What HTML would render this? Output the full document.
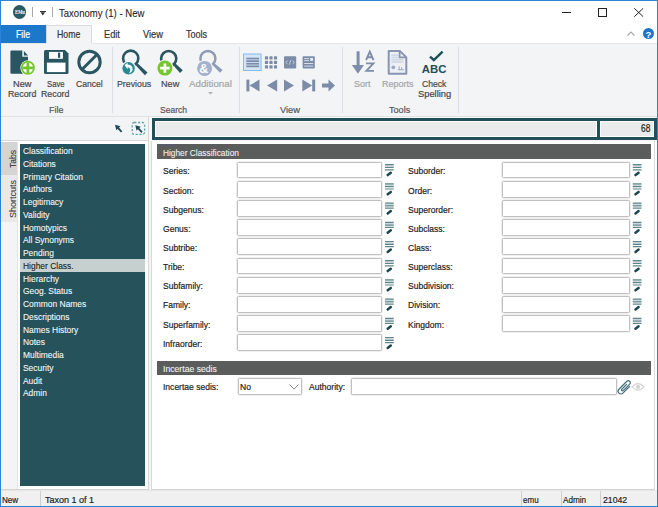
<!DOCTYPE html>
<html><head><meta charset="utf-8">
<style>
*{margin:0;padding:0;box-sizing:border-box}
html,body{width:658px;height:507px;overflow:hidden;background:#fff}
body{position:relative;font-family:"Liberation Sans",sans-serif;color:#222}
.a{position:absolute}
.t{position:absolute;white-space:nowrap;line-height:1;transform-origin:0 0}
.sep{position:absolute;width:1px;background:#dddee1}
.inp{position:absolute;background:#fff;border:1px solid #c0c0c0;border-radius:1.5px;box-shadow:0 0 0 0.6px #e2e2e2}
</style></head><body>

<div class="a" style="left:0;top:0;width:658px;height:507px;border:1px solid #2c84d6;z-index:50"></div>
<div class="a" style="left:13.1px;top:5.3px;width:13.3px;height:13.3px;border-radius:50%;background:#2b5a64"></div>
<div class="t" style="left:14.9px;top:9.0px;font-family:'Liberation Serif';font-size:6px;color:#fff;font-weight:bold;transform:scaleX(0.78);letter-spacing:-0.2px">EMu</div>
<div class="a" style="left:32px;top:7px;width:1px;height:9.5px;background:#a8a8a8"></div>
<div class="a" style="left:40px;top:10.6px;width:5.6px;height:1px;background:#333"></div>
<svg class="a" style="left:0;top:0" width="60" height="20"><path d="M40.5 12.3H45.1L42.8 15.6Z" fill="#333"/></svg>
<div class="a" style="left:52.2px;top:7px;width:1px;height:9.5px;background:#a8a8a8"></div>
<div class="t" style="left:58.60px;top:8.00px;font-size:11px;color:#1e1e1e;-webkit-text-stroke:0.1px #1e1e1e;transform:scaleX(0.8670);">Taxonomy (1) - New</div>
<div class="a" style="left:562px;top:12px;width:8.5px;height:1px;background:#222"></div>
<div class="a" style="left:597.7px;top:8px;width:9px;height:9px;border:1px solid #222"></div>
<svg class="a" style="left:634px;top:8px" width="10" height="9"><path d="M0.3 0.3L9.2 8.7M9.2 0.3L0.3 8.7" stroke="#222" stroke-width="1"/></svg>
<div class="a" style="left:1px;top:25px;width:44.5px;height:18px;background:#1b78cb"></div>
<div class="t" style="left:16.00px;top:29.00px;font-size:10.5px;color:#ffffff;-webkit-text-stroke:0.2px #ffffff;transform:scaleX(0.8284);">File</div>
<div class="a" style="left:46px;top:25px;width:46px;height:19px;background:#f3f4f6;border:1px solid #d9dadc;border-bottom:none"></div>
<div class="t" style="left:56.80px;top:29.00px;font-size:10.5px;color:#333;-webkit-text-stroke:0.2px #333;transform:scaleX(0.8321);">Home</div>
<div class="t" style="left:103.80px;top:29.00px;font-size:10.5px;color:#333;-webkit-text-stroke:0.2px #333;transform:scaleX(0.8785);">Edit</div>
<div class="t" style="left:143.00px;top:29.00px;font-size:10.5px;color:#333;-webkit-text-stroke:0.2px #333;transform:scaleX(0.8811);">View</div>
<div class="t" style="left:185.60px;top:29.00px;font-size:10.5px;color:#333;-webkit-text-stroke:0.2px #333;transform:scaleX(0.8612);">Tools</div>
<svg class="a" style="left:627px;top:31px" width="8" height="5"><path d="M0.5 4.5L4 1L7.5 4.5" stroke="#a8a8a8" fill="none" stroke-width="1.1"/></svg>
<div class="a" style="left:642.6px;top:28.2px;width:11.2px;height:11.2px;border-radius:50%;background:#1f74c8"></div>
<div class="t" style="left:645.4px;top:29.6px;font-size:9.5px;color:#fff;font-weight:bold">?</div>
<div class="a" style="left:1px;top:43px;width:656px;height:74px;background:#f3f4f6;border-top:1px solid #e3e4e6;border-bottom:1px solid #e1e2e4"></div>
<div class="a" style="left:46px;top:43px;width:46px;height:1px;background:#f3f4f6"></div>
<div class="sep" style="left:111.5px;top:47px;height:66px"></div>
<div class="sep" style="left:239px;top:47px;height:66px"></div>
<div class="sep" style="left:342.4px;top:47px;height:66px"></div>
<div class="sep" style="left:458px;top:47px;height:66px"></div>
<div class="t" style="left:13.00px;top:79.00px;font-size:9.5px;color:#474747;-webkit-text-stroke:0.2px #474747;transform:scaleX(0.9684);">New</div>
<div class="t" style="left:7.50px;top:89.00px;font-size:9.5px;color:#474747;-webkit-text-stroke:0.2px #474747;transform:scaleX(0.9281);">Record</div>
<div class="t" style="left:46.80px;top:79.00px;font-size:9.5px;color:#474747;-webkit-text-stroke:0.2px #474747;transform:scaleX(0.8111);">Save</div>
<div class="t" style="left:41.00px;top:89.00px;font-size:9.5px;color:#474747;-webkit-text-stroke:0.2px #474747;transform:scaleX(0.9281);">Record</div>
<div class="t" style="left:75.60px;top:79.00px;font-size:9.5px;color:#474747;-webkit-text-stroke:0.2px #474747;transform:scaleX(0.9020);">Cancel</div>
<div class="t" style="left:48.80px;top:105.00px;font-size:9.5px;color:#555;-webkit-text-stroke:0.2px #555;transform:scaleX(0.9412);">File</div>
<div class="t" style="left:116.90px;top:79.00px;font-size:9.5px;color:#474747;-webkit-text-stroke:0.2px #474747;transform:scaleX(0.9243);">Previous</div>
<div class="t" style="left:161.00px;top:79.00px;font-size:9.5px;color:#474747;-webkit-text-stroke:0.2px #474747;transform:scaleX(0.9579);">New</div>
<div class="t" style="left:188.70px;top:79.00px;font-size:9.5px;color:#a5a5a5;-webkit-text-stroke:0.2px #a5a5a5;transform:scaleX(1.0264);">Additional</div>
<svg class="a" style="left:207.5px;top:91.5px" width="5" height="3"><path d="M0 0H5L2.5 2.5Z" fill="#b0b0b0"/></svg>
<div class="t" style="left:160.40px;top:105.00px;font-size:9.5px;color:#555;-webkit-text-stroke:0.2px #555;transform:scaleX(0.9003);">Search</div>
<div class="t" style="left:279.80px;top:105.00px;font-size:9.5px;color:#555;-webkit-text-stroke:0.2px #555;transform:scaleX(0.9805);">View</div>
<div class="t" style="left:354.20px;top:79.00px;font-size:9.5px;color:#a5a5a5;-webkit-text-stroke:0.2px #a5a5a5;transform:scaleX(0.9425);">Sort</div>
<div class="t" style="left:381.50px;top:79.00px;font-size:9.5px;color:#a5a5a5;-webkit-text-stroke:0.2px #a5a5a5;transform:scaleX(0.9489);">Reports</div>
<div class="t" style="left:422.00px;top:79.00px;font-size:9.5px;color:#474747;-webkit-text-stroke:0.2px #474747;transform:scaleX(0.9000);">Check</div>
<div class="t" style="left:417.50px;top:89.00px;font-size:9.5px;color:#474747;-webkit-text-stroke:0.2px #474747;transform:scaleX(0.9822);">Spelling</div>
<div class="t" style="left:389.00px;top:105.00px;font-size:9.5px;color:#555;-webkit-text-stroke:0.2px #555;transform:scaleX(0.9550);">Tools</div>
<div class="a" style="left:1px;top:117px;width:148px;height:24px;background:#f3f4f6;border-right:1px solid #d6d6d6;border-bottom:1px solid #d6d6d6"></div>
<div class="a" style="left:149px;top:117px;width:508px;height:24px;background:#f7f7f8"></div>
<div class="a" style="left:152px;top:118.4px;width:504.5px;height:21.4px;background:#22505a"></div>
<div class="a" style="left:155px;top:121.4px;width:442px;height:15.4px;background:#eaebec;border:1px solid #fff"></div>
<div class="a" style="left:600px;top:121.4px;width:53.5px;height:15.4px;background:#eaebec;border:1px solid #fff"></div>
<div class="t" style="left:640.90px;top:124.00px;font-size:10px;color:#222;-webkit-text-stroke:0.2px #222;transform:scaleX(0.8378);">68</div>
<div class="a" style="left:1px;top:141px;width:148px;height:349px;background:#fff;border-right:1px solid #d9d9d9;border-bottom:1px solid #d4d4d4"></div>
<div class="a" style="left:149px;top:141px;width:2px;height:349px;background:#f3f3f3"></div>
<div class="a" style="left:1px;top:142px;width:17px;height:347px;background:#f3f4f6;border-right:1px solid #e4e4e4"></div>
<div class="a" style="left:1px;top:142.4px;width:16px;height:33px;background:#d4d4d4"></div>
<div class="a" style="left:1px;top:175.4px;width:16px;height:46.4px;background:#e9e9e9"></div>
<div class="t" style="left:8.13px;top:168.20px;font-size:9.5px;color:#2a2a2a;transform:rotate(-90deg) scaleX(0.9055)">Tabs</div>
<div class="t" style="left:8.13px;top:217.50px;font-size:9.5px;color:#2a2a2a;transform:rotate(-90deg) scaleX(0.9476)">Shortcuts</div>
<div class="a" style="left:20px;top:144px;width:125px;height:341.7px;background:#26525c"></div>
<div class="t" style="left:23.30px;top:146px;font-size:9.5px;color:#f4f6f6;transform:scaleX(0.8875);-webkit-text-stroke:0.1px #f4f6f6;">Classification</div>
<div class="t" style="left:23.30px;top:159px;font-size:9.5px;color:#f4f6f6;transform:scaleX(0.8875);-webkit-text-stroke:0.1px #f4f6f6;">Citations</div>
<div class="t" style="left:23.30px;top:172px;font-size:9.5px;color:#f4f6f6;transform:scaleX(0.8875);-webkit-text-stroke:0.1px #f4f6f6;">Primary Citation</div>
<div class="t" style="left:23.30px;top:184px;font-size:9.5px;color:#f4f6f6;transform:scaleX(0.8875);-webkit-text-stroke:0.1px #f4f6f6;">Authors</div>
<div class="t" style="left:23.30px;top:197px;font-size:9.5px;color:#f4f6f6;transform:scaleX(0.8875);-webkit-text-stroke:0.1px #f4f6f6;">Legitimacy</div>
<div class="t" style="left:23.30px;top:210px;font-size:9.5px;color:#f4f6f6;transform:scaleX(0.8875);-webkit-text-stroke:0.1px #f4f6f6;">Validity</div>
<div class="t" style="left:23.30px;top:223px;font-size:9.5px;color:#f4f6f6;transform:scaleX(0.8875);-webkit-text-stroke:0.1px #f4f6f6;">Homotypics</div>
<div class="t" style="left:23.30px;top:235px;font-size:9.5px;color:#f4f6f6;transform:scaleX(0.8875);-webkit-text-stroke:0.1px #f4f6f6;">All Synonyms</div>
<div class="t" style="left:23.30px;top:248px;font-size:9.5px;color:#f4f6f6;transform:scaleX(0.8875);-webkit-text-stroke:0.1px #f4f6f6;">Pending</div>
<div class="a" style="left:20px;top:258.95px;width:125px;height:12.75px;background:#c6d1cf"></div>
<div class="t" style="left:23.30px;top:261px;font-size:9.5px;color:#1a1a1a;transform:scaleX(0.8875);-webkit-text-stroke:0.1px #1a1a1a;">Higher Class.</div>
<div class="t" style="left:23.30px;top:274px;font-size:9.5px;color:#f4f6f6;transform:scaleX(0.8875);-webkit-text-stroke:0.1px #f4f6f6;">Hierarchy</div>
<div class="t" style="left:23.30px;top:286px;font-size:9.5px;color:#f4f6f6;transform:scaleX(0.8875);-webkit-text-stroke:0.1px #f4f6f6;">Geog. Status</div>
<div class="t" style="left:23.30px;top:299px;font-size:9.5px;color:#f4f6f6;transform:scaleX(0.8875);-webkit-text-stroke:0.1px #f4f6f6;">Common Names</div>
<div class="t" style="left:23.30px;top:312px;font-size:9.5px;color:#f4f6f6;transform:scaleX(0.8875);-webkit-text-stroke:0.1px #f4f6f6;">Descriptions</div>
<div class="t" style="left:23.30px;top:325px;font-size:9.5px;color:#f4f6f6;transform:scaleX(0.8875);-webkit-text-stroke:0.1px #f4f6f6;">Names History</div>
<div class="t" style="left:23.30px;top:337px;font-size:9.5px;color:#f4f6f6;transform:scaleX(0.8875);-webkit-text-stroke:0.1px #f4f6f6;">Notes</div>
<div class="t" style="left:23.30px;top:350px;font-size:9.5px;color:#f4f6f6;transform:scaleX(0.8875);-webkit-text-stroke:0.1px #f4f6f6;">Multimedia</div>
<div class="t" style="left:23.30px;top:363px;font-size:9.5px;color:#f4f6f6;transform:scaleX(0.8875);-webkit-text-stroke:0.1px #f4f6f6;">Security</div>
<div class="t" style="left:23.30px;top:376px;font-size:9.5px;color:#f4f6f6;transform:scaleX(0.8875);-webkit-text-stroke:0.1px #f4f6f6;">Audit</div>
<div class="t" style="left:23.30px;top:388px;font-size:9.5px;color:#f4f6f6;transform:scaleX(0.8875);-webkit-text-stroke:0.1px #f4f6f6;">Admin</div>
<div class="a" style="left:151px;top:141px;width:504px;height:349px;background:#fff;border-left:1px solid #d9d9d9;border-right:1px solid #d9d9d9;border-bottom:1px solid #d4d4d4"></div>
<div class="a" style="left:157px;top:144.2px;width:494px;height:14.6px;background:#5b5c5c"></div>
<div class="t" style="left:163.00px;top:148.00px;font-size:9.5px;color:#f2f2f2;-webkit-text-stroke:0.1px #f2f2f2;transform:scaleX(0.8764);">Higher Classification</div>
<div class="a" style="left:157px;top:360.6px;width:494px;height:14.8px;background:#5b5c5c"></div>
<div class="t" style="left:163.00px;top:364.00px;font-size:9.5px;color:#f2f2f2;-webkit-text-stroke:0.1px #f2f2f2;transform:scaleX(0.9103);">Incertae sedis</div>
<div class="t" style="left:163.00px;top:166px;font-size:9.5px;color:#222;transform:scaleX(0.8977);-webkit-text-stroke:0.2px #222;">Series:</div>
<div class="inp" style="left:237.2px;top:161.60px;width:144.4px;height:16.8px"></div>

<div class="t" style="left:163.00px;top:186px;font-size:9.5px;color:#222;transform:scaleX(0.8977);-webkit-text-stroke:0.2px #222;">Section:</div>
<div class="inp" style="left:237.2px;top:180.80px;width:144.4px;height:16.8px"></div>

<div class="t" style="left:163.00px;top:205px;font-size:9.5px;color:#222;transform:scaleX(0.8977);-webkit-text-stroke:0.2px #222;">Subgenus:</div>
<div class="inp" style="left:237.2px;top:200.00px;width:144.4px;height:16.8px"></div>

<div class="t" style="left:163.00px;top:224px;font-size:9.5px;color:#222;transform:scaleX(0.8977);-webkit-text-stroke:0.2px #222;">Genus:</div>
<div class="inp" style="left:237.2px;top:219.20px;width:144.4px;height:16.8px"></div>

<div class="t" style="left:163.00px;top:243px;font-size:9.5px;color:#222;transform:scaleX(0.8977);-webkit-text-stroke:0.2px #222;">Subtribe:</div>
<div class="inp" style="left:237.2px;top:238.40px;width:144.4px;height:16.8px"></div>

<div class="t" style="left:163.00px;top:262px;font-size:9.5px;color:#222;transform:scaleX(0.8977);-webkit-text-stroke:0.2px #222;">Tribe:</div>
<div class="inp" style="left:237.2px;top:257.60px;width:144.4px;height:16.8px"></div>

<div class="t" style="left:163.00px;top:281px;font-size:9.5px;color:#222;transform:scaleX(0.8977);-webkit-text-stroke:0.2px #222;">Subfamily:</div>
<div class="inp" style="left:237.2px;top:276.80px;width:144.4px;height:16.8px"></div>

<div class="t" style="left:163.00px;top:300px;font-size:9.5px;color:#222;transform:scaleX(0.8977);-webkit-text-stroke:0.2px #222;">Family:</div>
<div class="inp" style="left:237.2px;top:296.00px;width:144.4px;height:16.8px"></div>

<div class="t" style="left:163.00px;top:320px;font-size:9.5px;color:#222;transform:scaleX(0.8977);-webkit-text-stroke:0.2px #222;">Superfamily:</div>
<div class="inp" style="left:237.2px;top:315.20px;width:144.4px;height:16.8px"></div>

<div class="t" style="left:163.00px;top:339px;font-size:9.5px;color:#222;transform:scaleX(0.8977);-webkit-text-stroke:0.2px #222;">Infraorder:</div>
<div class="inp" style="left:237.2px;top:334.40px;width:144.4px;height:16.8px"></div>

<div class="t" style="left:407.80px;top:166px;font-size:9.5px;color:#222;transform:scaleX(0.8977);-webkit-text-stroke:0.2px #222;">Suborder:</div>
<div class="inp" style="left:502px;top:161.60px;width:127.5px;height:16.8px"></div>

<div class="t" style="left:407.80px;top:186px;font-size:9.5px;color:#222;transform:scaleX(0.8977);-webkit-text-stroke:0.2px #222;">Order:</div>
<div class="inp" style="left:502px;top:180.80px;width:127.5px;height:16.8px"></div>

<div class="t" style="left:407.80px;top:205px;font-size:9.5px;color:#222;transform:scaleX(0.8977);-webkit-text-stroke:0.2px #222;">Superorder:</div>
<div class="inp" style="left:502px;top:200.00px;width:127.5px;height:16.8px"></div>

<div class="t" style="left:407.80px;top:224px;font-size:9.5px;color:#222;transform:scaleX(0.8977);-webkit-text-stroke:0.2px #222;">Subclass:</div>
<div class="inp" style="left:502px;top:219.20px;width:127.5px;height:16.8px"></div>

<div class="t" style="left:407.80px;top:243px;font-size:9.5px;color:#222;transform:scaleX(0.8977);-webkit-text-stroke:0.2px #222;">Class:</div>
<div class="inp" style="left:502px;top:238.40px;width:127.5px;height:16.8px"></div>

<div class="t" style="left:407.80px;top:262px;font-size:9.5px;color:#222;transform:scaleX(0.8977);-webkit-text-stroke:0.2px #222;">Superclass:</div>
<div class="inp" style="left:502px;top:257.60px;width:127.5px;height:16.8px"></div>

<div class="t" style="left:407.80px;top:281px;font-size:9.5px;color:#222;transform:scaleX(0.8977);-webkit-text-stroke:0.2px #222;">Subdivision:</div>
<div class="inp" style="left:502px;top:276.80px;width:127.5px;height:16.8px"></div>

<div class="t" style="left:407.80px;top:300px;font-size:9.5px;color:#222;transform:scaleX(0.8977);-webkit-text-stroke:0.2px #222;">Division:</div>
<div class="inp" style="left:502px;top:296.00px;width:127.5px;height:16.8px"></div>

<div class="t" style="left:407.80px;top:320px;font-size:9.5px;color:#222;transform:scaleX(0.8977);-webkit-text-stroke:0.2px #222;">Kingdom:</div>
<div class="inp" style="left:502px;top:315.20px;width:127.5px;height:16.8px"></div>

<div class="t" style="left:163.00px;top:382px;font-size:9.5px;color:#222;transform:scaleX(0.8977);-webkit-text-stroke:0.2px #222;">Incertae sedis:</div>
<div class="inp" style="left:237.5px;top:378.2px;width:64px;height:16.8px"></div>
<div class="t" style="left:239.50px;top:382px;font-size:9.5px;color:#222;transform:scaleX(0.8977);-webkit-text-stroke:0.2px #222;">No</div>
<svg class="a" style="left:288.5px;top:383.5px" width="10" height="6"><path d="M0.5 0.5L5 5.2L9.5 0.5" stroke="#808080" fill="none" stroke-width="1"/></svg>
<div class="t" style="left:309.00px;top:382px;font-size:9.5px;color:#222;transform:scaleX(0.8977);-webkit-text-stroke:0.2px #222;">Authority:</div>
<div class="inp" style="left:351px;top:378.2px;width:266px;height:16.8px"></div>
<svg class="a" style="left:0;top:0;z-index:5" width="658" height="507" viewBox="0 0 658 507">
<path d="M11.4 50.4H22.3V56.7H28V72.7Q28 73.7 27 73.7H11.4Q10.4 73.7 10.4 72.7V51.4Q10.4 50.4 11.4 50.4Z" fill="#2a5661"/>
<path d="M23.9 51V55.4H28Z" fill="#2a5661"/>
<circle cx="27.9" cy="67.8" r="7.6" fill="#f3f4f6"/>
<circle cx="27.9" cy="67.8" r="6.1" fill="#fff" stroke="#74c62c" stroke-width="1.8"/>
<path d="M22.6 67.8H33.2M27.9 62.5V73.1" stroke="#74c62c" stroke-width="2.8"/>
<path d="M45.5 50.1H65L68.5 53.6V72.4Q68.5 73.9 67 73.9H45.5Q44 73.9 44 72.4V51.6Q44 50.1 45.5 50.1Z" fill="#2a5661"/>
<rect x="49" y="51.9" width="13.9" height="6.9" fill="#fff"/>
<rect x="58" y="52.6" width="2.2" height="5.2" fill="#2a5661"/>
<rect x="46.9" y="62.6" width="18.6" height="9.5" fill="#fff"/>
<circle cx="89.5" cy="62" r="10.7" fill="none" stroke="#2a5661" stroke-width="3"/>
<path d="M97 54.5L82 69.5" stroke="#2a5661" stroke-width="3"/>
<circle cx="130.7" cy="58.2" r="7.6" fill="none" stroke="#2a5661" stroke-width="2.6"/>
<path d="M135.08 64.52L144.86 75.14L147.54 72.46L136.92 62.68Z" fill="#2a5661"/>
<circle cx="128.6" cy="68.3" r="7.4" fill="#f3f4f6"/>
<circle cx="128.6" cy="68.3" r="6.2" fill="#2a8a91"/>
<path d="M124.6 65.3L127.6 62.8V64.4Q133.2 64.6 132.6 69.6Q132 72.8 129 73.4Q130.8 71.2 130.2 69.2Q129.6 67.2 127.6 67.3V69.2Z" fill="#fff"/>
<circle cx="168.7" cy="58.6" r="7.6" fill="none" stroke="#2a5661" stroke-width="2.6"/>
<path d="M173.07 64.91L180.04 72.93L182.76 70.27L174.93 63.09Z" fill="#2a5661"/>
<circle cx="164.9" cy="68.1" r="8.6" fill="#f3f4f6"/>
<circle cx="164.9" cy="68.1" r="7.5" fill="#76c62f"/>
<path d="M160.2 68.1H169.6M164.9 63.4V72.8" stroke="#fff" stroke-width="2.7"/>
<circle cx="207.9" cy="58.5" r="7.5" fill="none" stroke="#8c9bb6" stroke-width="2.5"/>
<path d="M212.32 64.85L220.01 72.79L222.59 70.01L214.08 62.95Z" fill="#8c9bb6"/>
<circle cx="204.6" cy="68.4" r="8.6" fill="#f3f4f6"/>
<circle cx="204.6" cy="68.4" r="7.5" fill="#a4b1ca"/>
<text x="199.2" y="73" font-family="Liberation Sans" font-weight="bold" font-size="12.5" fill="#fff">&amp;</text>
<rect x="243.5" y="54" width="17.6" height="16.5" fill="#d3e5f8" stroke="#86b9ec" stroke-width="1"/>
<rect x="246.3" y="57.7" width="12.8" height="1.7" fill="#7b8ba8"/>
<rect x="246.3" y="60.300000000000004" width="12.8" height="1.7" fill="#7b8ba8"/>
<rect x="246.3" y="62.900000000000006" width="12.8" height="1.7" fill="#7b8ba8"/>
<rect x="246.3" y="65.5" width="12.8" height="1.7" fill="#7b8ba8"/>
<rect x="264.9" y="56.3" width="3.2" height="3.2" rx="0.6" fill="#7b8ba8"/>
<rect x="264.9" y="60.8" width="3.2" height="3.2" rx="0.6" fill="#7b8ba8"/>
<rect x="264.9" y="65.3" width="3.2" height="3.2" rx="0.6" fill="#7b8ba8"/>
<rect x="269.4" y="56.3" width="3.2" height="3.2" rx="0.6" fill="#7b8ba8"/>
<rect x="269.4" y="60.8" width="3.2" height="3.2" rx="0.6" fill="#7b8ba8"/>
<rect x="269.4" y="65.3" width="3.2" height="3.2" rx="0.6" fill="#7b8ba8"/>
<rect x="273.9" y="56.3" width="3.2" height="3.2" rx="0.6" fill="#7b8ba8"/>
<rect x="273.9" y="60.8" width="3.2" height="3.2" rx="0.6" fill="#7b8ba8"/>
<rect x="273.9" y="65.3" width="3.2" height="3.2" rx="0.6" fill="#7b8ba8"/>
<rect x="284" y="56.3" width="12.2" height="12.2" rx="1" fill="#7b8ba8"/>
<path d="M287.4 60.6L286 62.4L287.4 64.2M292.8 60.6L294.2 62.4L292.8 64.2M290.9 60L289.3 64.8" stroke="#dfe4ee" stroke-width="0.7" fill="none"/>
<rect x="302.6" y="56.3" width="12.2" height="12.2" rx="1" fill="#7b8ba8"/>
<path d="M304.2 58.6H309M304.2 60.6H309M304.2 63.5H313.2M304.2 66.1H313.2" stroke="#e3e7ef" stroke-width="0.9"/>
<rect x="310.1" y="57.9" width="3" height="3" fill="#e3e7ef"/>
<rect x="246.4" y="79.6" width="3" height="11.8" fill="#7b8ba8"/>
<path d="M259.5 79.6V91.4L249.4 85.5Z" fill="#7b8ba8"/>
<path d="M277.2 79.6V91.4L267 85.5Z" fill="#7b8ba8"/>
<path d="M284 79.6V91.4L294 85.5Z" fill="#7b8ba8"/>
<path d="M302.3 79.6V91.4L312.2 85.5Z" fill="#7b8ba8"/>
<rect x="312.2" y="79.6" width="3" height="11.8" fill="#7b8ba8"/>
<path d="M322 83.4H328.5V79.6L335 85.5L328.5 91.4V87.6H322Z" fill="#7b8ba8"/>
<rect x="356.6" y="51.3" width="3" height="14.2" fill="#7e8da9"/>
<path d="M351.9 65H364L357.95 73.7Z" fill="#7e8da9"/>
<path d="M366.1 60.1L369.8 51.6L373.5 60.1M367.4 57.3H372.2" fill="none" stroke="#7e8da9" stroke-width="1.9"/>
<path d="M366 63.4H373.4L366.4 70.9H374" fill="none" stroke="#7e8da9" stroke-width="1.9"/>
<path d="M388.7 50.9H399.8L406.3 57.4V73.7H388.7Z" fill="#eef0f4" stroke="#8795b1" stroke-width="2" stroke-linejoin="round"/>
<path d="M399.6 51V57.4H406" fill="none" stroke="#8795b1" stroke-width="1.8"/>
<rect x="391.3" y="54.3" width="7" height="1.6" fill="#cfd6e3"/>
<rect x="391.3" y="56.6" width="7" height="1.6" fill="#cfd6e3"/>
<rect x="391.3" y="58.9" width="12" height="1.6" fill="#cfd6e3"/>
<rect x="391.3" y="61.2" width="12" height="1.6" fill="#cfd6e3"/>
<circle cx="393.3" cy="67.3" r="1.9" fill="#9ba8c0"/>
<path d="M397.8 69.8H404M399.2 66.3V69.8M401.6 67.3V69.8" stroke="#9ba8c0" stroke-width="1"/>
<path d="M430 56.6L433.8 60L442.6 51.6" fill="none" stroke="#1f4f58" stroke-width="2.4"/>
<text x="421.8" y="73.2" font-family="Liberation Sans" font-weight="bold" font-size="11.6" fill="#1f4f58" textLength="24.6" lengthAdjust="spacingAndGlyphs">ABC</text>
<path d="M115 124.8L120.5 126.3L119 127.6L122.3 131.2L121 132.5L117.7 128.9L116.3 130.3Z" fill="#1f4c56"/>
<rect x="132.2" y="122.5" width="12.4" height="11.8" rx="2" fill="none" stroke="#5ea6aa" stroke-width="1.3" stroke-dasharray="2.2 1.6"/>
<path d="M135.3 125.2L140.8 126.7L139.3 128L142.6 131.6L141.3 132.9L138 129.3L136.6 130.7Z" fill="#1f4c56"/>
<g transform="translate(625.3 386.8) rotate(-45)"><path d="M3 -0.8H-4.2A1 1 0 0 0 -4.2 1.2H5A2 2 0 0 0 5 -2.8H-6.2A2.8 2.8 0 0 0 -6.2 2.8H3.6" fill="none" stroke="#44707a" stroke-width="1.2"/></g>
<path d="M632 386.9Q638 380.5 644 386.9Q638 393.3 632 386.9Z" fill="none" stroke="#d4d4d4" stroke-width="1.3"/>
<circle cx="638" cy="386.9" r="2.1" fill="#d4d4d4"/>
<rect x="385" y="164.90" width="8.7" height="2.4" fill="#cbd9db"/><path d="M385 164.70H393.7M385 167.50H393.7M385 169.80H393.7" stroke="#5f858b" stroke-width="1.2"/><path d="M387.7 175.10L390.8 172.70" stroke="#1b4750" stroke-width="2.5" stroke-linecap="round"/>
<rect x="385" y="184.10" width="8.7" height="2.4" fill="#cbd9db"/><path d="M385 183.90H393.7M385 186.70H393.7M385 189.00H393.7" stroke="#5f858b" stroke-width="1.2"/><path d="M387.7 194.30L390.8 191.90" stroke="#1b4750" stroke-width="2.5" stroke-linecap="round"/>
<rect x="385" y="203.30" width="8.7" height="2.4" fill="#cbd9db"/><path d="M385 203.10H393.7M385 205.90H393.7M385 208.20H393.7" stroke="#5f858b" stroke-width="1.2"/><path d="M387.7 213.50L390.8 211.10" stroke="#1b4750" stroke-width="2.5" stroke-linecap="round"/>
<rect x="385" y="222.50" width="8.7" height="2.4" fill="#cbd9db"/><path d="M385 222.30H393.7M385 225.10H393.7M385 227.40H393.7" stroke="#5f858b" stroke-width="1.2"/><path d="M387.7 232.70L390.8 230.30" stroke="#1b4750" stroke-width="2.5" stroke-linecap="round"/>
<rect x="385" y="241.70" width="8.7" height="2.4" fill="#cbd9db"/><path d="M385 241.50H393.7M385 244.30H393.7M385 246.60H393.7" stroke="#5f858b" stroke-width="1.2"/><path d="M387.7 251.90L390.8 249.50" stroke="#1b4750" stroke-width="2.5" stroke-linecap="round"/>
<rect x="385" y="260.90" width="8.7" height="2.4" fill="#cbd9db"/><path d="M385 260.70H393.7M385 263.50H393.7M385 265.80H393.7" stroke="#5f858b" stroke-width="1.2"/><path d="M387.7 271.10L390.8 268.70" stroke="#1b4750" stroke-width="2.5" stroke-linecap="round"/>
<rect x="385" y="280.10" width="8.7" height="2.4" fill="#cbd9db"/><path d="M385 279.90H393.7M385 282.70H393.7M385 285.00H393.7" stroke="#5f858b" stroke-width="1.2"/><path d="M387.7 290.30L390.8 287.90" stroke="#1b4750" stroke-width="2.5" stroke-linecap="round"/>
<rect x="385" y="299.30" width="8.7" height="2.4" fill="#cbd9db"/><path d="M385 299.10H393.7M385 301.90H393.7M385 304.20H393.7" stroke="#5f858b" stroke-width="1.2"/><path d="M387.7 309.50L390.8 307.10" stroke="#1b4750" stroke-width="2.5" stroke-linecap="round"/>
<rect x="385" y="318.50" width="8.7" height="2.4" fill="#cbd9db"/><path d="M385 318.30H393.7M385 321.10H393.7M385 323.40H393.7" stroke="#5f858b" stroke-width="1.2"/><path d="M387.7 328.70L390.8 326.30" stroke="#1b4750" stroke-width="2.5" stroke-linecap="round"/>
<rect x="385" y="337.70" width="8.7" height="2.4" fill="#cbd9db"/><path d="M385 337.50H393.7M385 340.30H393.7M385 342.60H393.7" stroke="#5f858b" stroke-width="1.2"/><path d="M387.7 347.90L390.8 345.50" stroke="#1b4750" stroke-width="2.5" stroke-linecap="round"/>
<rect x="632.8" y="164.90" width="8.7" height="2.4" fill="#cbd9db"/><path d="M632.8 164.70H641.5M632.8 167.50H641.5M632.8 169.80H641.5" stroke="#5f858b" stroke-width="1.2"/><path d="M635.5 175.10L638.5999999999999 172.70" stroke="#1b4750" stroke-width="2.5" stroke-linecap="round"/>
<rect x="632.8" y="184.10" width="8.7" height="2.4" fill="#cbd9db"/><path d="M632.8 183.90H641.5M632.8 186.70H641.5M632.8 189.00H641.5" stroke="#5f858b" stroke-width="1.2"/><path d="M635.5 194.30L638.5999999999999 191.90" stroke="#1b4750" stroke-width="2.5" stroke-linecap="round"/>
<rect x="632.8" y="203.30" width="8.7" height="2.4" fill="#cbd9db"/><path d="M632.8 203.10H641.5M632.8 205.90H641.5M632.8 208.20H641.5" stroke="#5f858b" stroke-width="1.2"/><path d="M635.5 213.50L638.5999999999999 211.10" stroke="#1b4750" stroke-width="2.5" stroke-linecap="round"/>
<rect x="632.8" y="222.50" width="8.7" height="2.4" fill="#cbd9db"/><path d="M632.8 222.30H641.5M632.8 225.10H641.5M632.8 227.40H641.5" stroke="#5f858b" stroke-width="1.2"/><path d="M635.5 232.70L638.5999999999999 230.30" stroke="#1b4750" stroke-width="2.5" stroke-linecap="round"/>
<rect x="632.8" y="241.70" width="8.7" height="2.4" fill="#cbd9db"/><path d="M632.8 241.50H641.5M632.8 244.30H641.5M632.8 246.60H641.5" stroke="#5f858b" stroke-width="1.2"/><path d="M635.5 251.90L638.5999999999999 249.50" stroke="#1b4750" stroke-width="2.5" stroke-linecap="round"/>
<rect x="632.8" y="260.90" width="8.7" height="2.4" fill="#cbd9db"/><path d="M632.8 260.70H641.5M632.8 263.50H641.5M632.8 265.80H641.5" stroke="#5f858b" stroke-width="1.2"/><path d="M635.5 271.10L638.5999999999999 268.70" stroke="#1b4750" stroke-width="2.5" stroke-linecap="round"/>
<rect x="632.8" y="280.10" width="8.7" height="2.4" fill="#cbd9db"/><path d="M632.8 279.90H641.5M632.8 282.70H641.5M632.8 285.00H641.5" stroke="#5f858b" stroke-width="1.2"/><path d="M635.5 290.30L638.5999999999999 287.90" stroke="#1b4750" stroke-width="2.5" stroke-linecap="round"/>
<rect x="632.8" y="299.30" width="8.7" height="2.4" fill="#cbd9db"/><path d="M632.8 299.10H641.5M632.8 301.90H641.5M632.8 304.20H641.5" stroke="#5f858b" stroke-width="1.2"/><path d="M635.5 309.50L638.5999999999999 307.10" stroke="#1b4750" stroke-width="2.5" stroke-linecap="round"/>
<rect x="632.8" y="318.50" width="8.7" height="2.4" fill="#cbd9db"/><path d="M632.8 318.30H641.5M632.8 321.10H641.5M632.8 323.40H641.5" stroke="#5f858b" stroke-width="1.2"/><path d="M635.5 328.70L638.5999999999999 326.30" stroke="#1b4750" stroke-width="2.5" stroke-linecap="round"/>
</svg>
<div class="a" style="left:1px;top:490px;width:656px;height:16px;background:#f0f0f0;border-top:1px solid #e6e6e6"></div>
<div class="t" style="left:1.80px;top:495.00px;font-size:9.5px;color:#222;-webkit-text-stroke:0.2px #222;transform:scaleX(0.8526);">New</div>
<div class="a" style="left:40px;top:491px;width:1px;height:15px;background:#cfcfcf"></div>
<div class="t" style="left:45.00px;top:495.00px;font-size:9.5px;color:#222;-webkit-text-stroke:0.2px #222;transform:scaleX(0.9459);">Taxon 1 of 1</div>
<div class="a" style="left:521px;top:491px;width:1px;height:15px;background:#cfcfcf"></div>
<div class="a" style="left:560.5px;top:491px;width:1px;height:15px;background:#cfcfcf"></div>
<div class="a" style="left:600.4px;top:491px;width:1px;height:15px;background:#cfcfcf"></div>
<div class="t" style="left:522.80px;top:495.00px;font-size:9.5px;color:#222;-webkit-text-stroke:0.2px #222;transform:scaleX(0.8432);">emu</div>
<div class="t" style="left:562.90px;top:495.00px;font-size:9.5px;color:#222;-webkit-text-stroke:0.2px #222;transform:scaleX(0.8587);">Admin</div>
<div class="t" style="left:603.20px;top:495.00px;font-size:9.5px;color:#222;-webkit-text-stroke:0.2px #222;transform:scaleX(0.9129);">21042</div>
</body></html>
